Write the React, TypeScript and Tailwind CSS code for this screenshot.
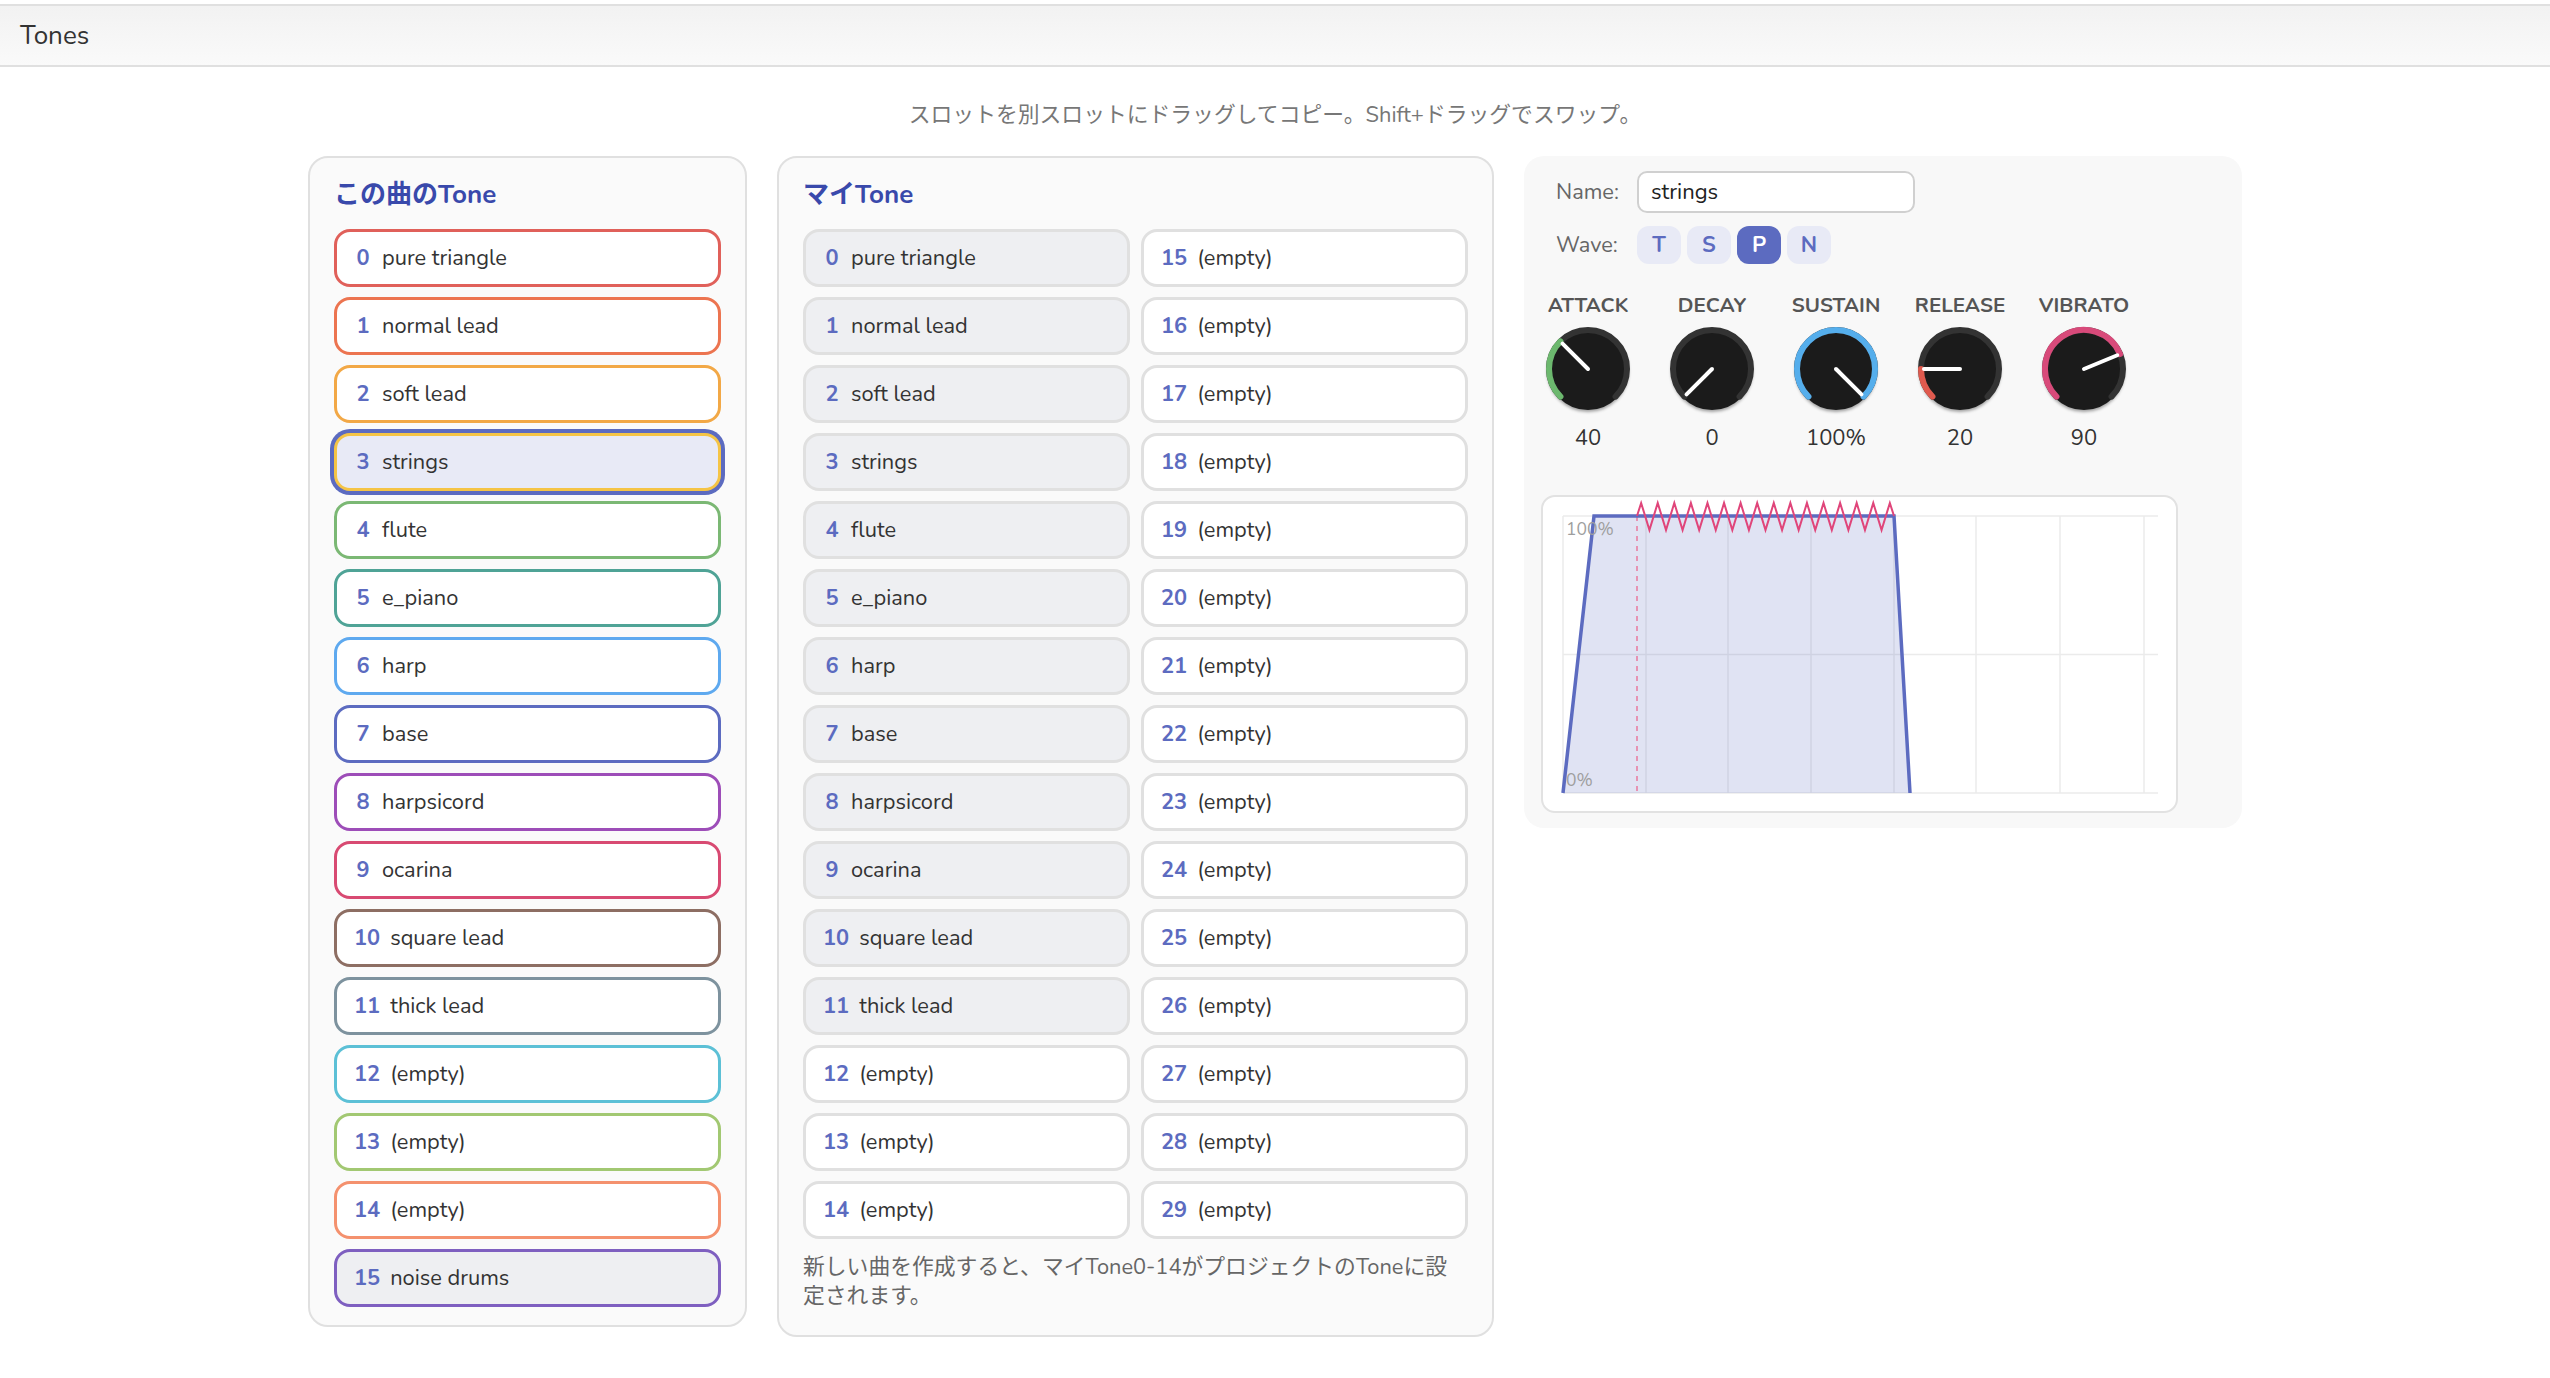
import clsx from 'clsx';

interface SongTone {
  name: string | null;
  border: string;
  selected?: boolean;
  muted?: boolean;
}

const songTones: SongTone[] = [
  { name: 'pure triangle', border: 'border-[#e0605a]' },
  { name: 'normal lead', border: 'border-[#ec7450]' },
  { name: 'soft lead', border: 'border-[#f2a846]' },
  { name: 'strings', border: 'border-[#f5c445]', selected: true },
  { name: 'flute', border: 'border-[#7bb874]' },
  { name: 'e_piano', border: 'border-[#4fa396]' },
  { name: 'harp', border: 'border-[#5ea9ef]' },
  { name: 'base', border: 'border-[#5c6bc0]' },
  { name: 'harpsicord', border: 'border-[#9d4db8]' },
  { name: 'ocarina', border: 'border-[#d84a72]' },
  { name: 'square lead', border: 'border-[#8d6e63]' },
  { name: 'thick lead', border: 'border-[#7d929e]' },
  { name: null, border: 'border-[#5cc0d6]' },
  { name: null, border: 'border-[#a2c872]' },
  { name: null, border: 'border-[#f4916e]' },
  { name: 'noise drums', border: 'border-[#7e5fc0]', muted: true },
];

const myTones: (string | null)[] = [
  'pure triangle',
  'normal lead',
  'soft lead',
  'strings',
  'flute',
  'e_piano',
  'harp',
  'base',
  'harpsicord',
  'ocarina',
  'square lead',
  'thick lead',
  null,
  null,
  null,
];

const knobs = [
  { label: 'ATTACK', value: '40', angle: -45, color: '#6cb86e' },
  { label: 'DECAY', value: '0', angle: -135, color: null },
  { label: 'SUSTAIN', value: '100%', angle: 135, color: '#55aeec' },
  { label: 'RELEASE', value: '20', angle: -90, color: '#e05a4e' },
  { label: 'VIBRATO', value: '90', angle: 67.5, color: '#d84a7a' },
];

function ToneSlot({
  index,
  name,
  className,
}: {
  index: number;
  name: string | null;
  className?: string;
}) {
  return (
    <div
      className={clsx(
        'flex h-[58px] items-center rounded-[16px] border-[3px] pl-[13px] text-[21.8px]',
        className
      )}
    >
      <span className="min-w-[26px] px-[4px] text-center font-bold text-[#5c6bc0]">{index}</span>
      <span className="ml-[6px] text-[#333]">{name ?? '(empty)'}</span>
    </div>
  );
}

function polar(angle: number, r: number, cx: number, cy: number) {
  const rad = (angle * Math.PI) / 180;
  return [cx + r * Math.sin(rad), cy - r * Math.cos(rad)];
}

function arcPath(a0: number, a1: number, r: number, cx: number, cy: number) {
  const [x0, y0] = polar(a0, r, cx, cy);
  const [x1, y1] = polar(a1, r, cx, cy);
  const large = a1 - a0 > 180 ? 1 : 0;
  return `M${x0} ${y0} A${r} ${r} 0 ${large} 1 ${x1} ${y1}`;
}

function Knob({ angle, color, id }: { angle: number; color: string | null; id: string }) {
  const cx = 45;
  const cy = 43;
  const [px, py] = polar(angle, 36, cx, cy);
  return (
    <svg width="90" height="90" viewBox="0 0 90 90">
      <defs>
        <filter id={id} x="-20%" y="-20%" width="140%" height="140%">
          <feGaussianBlur stdDeviation="1.6" />
        </filter>
      </defs>
      <circle cx={cx} cy={cy + 2} r="41" fill="rgba(0,0,0,0.35)" filter={`url(#${id})`} />
      <circle cx={cx} cy={cy} r="41" fill="#1b1b1b" />
      <path d={arcPath(-135, 135, 39, cx, cy)} fill="none" stroke="#333" strokeWidth="6" strokeLinecap="round" />
      {color ? (
        <path d={arcPath(-135, angle, 39, cx, cy)} fill="none" stroke={color} strokeWidth="6" strokeLinecap="round" />
      ) : null}
      <line x1={cx} y1={cy} x2={px} y2={py} stroke="#fff" strokeWidth="4" strokeLinecap="round" />
    </svg>
  );
}

function EnvelopeChart() {
  const ox = 20;
  const oy = 19;
  const pw = 595;
  const ph = 277;
  const period = 16.58;
  const zig: string[] = [`${ox + 74},${oy}`];
  for (let k = 0; k <= 30; k++) {
    const x = ox + 74 + period / 4 + (k * period) / 2;
    zig.push(`${x},${oy + (k % 2 === 0 ? -13 : 14)}`);
  }
  zig.push(`${ox + 331},${oy}`);
  const env = `${ox},${oy + ph} ${ox + 31},${oy} ${ox + 331},${oy} ${ox + 347},${oy + ph}`;

  return (
    <svg width="633" height="314" viewBox="0 0 633 314">
      {[0, 83, 165, 248, 331, 413, 497, 581].map((x) => (
        <line key={x} x1={ox + x} y1={oy} x2={ox + x} y2={oy + ph} stroke="#ebebeb" strokeWidth="1.5" />
      ))}
      {[0, 138.5, 277].map((y) => (
        <line key={y} x1={ox} y1={oy + y} x2={ox + pw} y2={oy + y} stroke="#ebebeb" strokeWidth="1.5" />
      ))}
      <polygon points={env} fill="#5c6bc0" fillOpacity="0.19" />
      <line
        x1={ox + 74}
        y1={oy}
        x2={ox + 74}
        y2={oy + ph}
        stroke="#e8799f"
        strokeWidth="1.5"
        strokeDasharray="5 5"
      />
      <polyline points={env} fill="none" stroke="#5c6bc0" strokeWidth="3.5" />
      <polyline points={zig.join(' ')} fill="none" stroke="#e0457a" strokeWidth="2" />
      <text x={ox + 3} y={oy + 19} fill="#9e9e9e" fontSize="17.5">
        100%
      </text>
      <text x={ox + 3} y={oy + 270} fill="#9e9e9e" fontSize="17.5">
        0%
      </text>
    </svg>
  );
}

export default function App() {
  return (
    <div className="min-h-screen bg-white font-['Nunito','Noto_Sans','Noto_Sans_CJK_JP',sans-serif] text-[#333]">
      <div className="h-[4px] bg-white" />
      <header className="flex h-[63px] items-center border-y-2 border-[#e0e0e0] bg-gradient-to-b from-[#f2f2f2] to-[#fafafa] px-[20px]">
        <h1 className="text-[26px] text-[#333]">Tones</h1>
      </header>

      <p className="pt-[33px] text-center text-[21.8px] leading-[30px] text-[#777]">
        スロットを別スロットにドラッグしてコピー。Shift+ドラッグでスワップ。
      </p>

      <main className="mt-[26px] flex items-start justify-center gap-[30px]">
        <section className="w-[439px] rounded-[20px] border-2 border-[#e0e0e0] bg-[#fafafa] px-[24px] pt-[22px] pb-[18px]">
          <h2 className="mb-[19px] text-[26px] font-bold leading-[30px] text-[#3949ab]">この曲のTone</h2>
          <div className="flex flex-col gap-[10px]">
            {songTones.map((tone, i) => (
              <ToneSlot
                key={i}
                index={i}
                name={tone.name}
                className={clsx(
                  tone.border,
                  tone.selected
                    ? 'bg-[#e8eaf6] shadow-[0_0_0_4px_#5c6bc0]'
                    : tone.muted
                      ? 'bg-[#eeeff2]'
                      : 'bg-white'
                )}
              />
            ))}
          </div>
        </section>

        <section className="w-[717px] rounded-[20px] border-2 border-[#e0e0e0] bg-[#fafafa] px-[24px] pt-[22px] pb-[24px]">
          <h2 className="mb-[19px] text-[26px] font-bold leading-[30px] text-[#3949ab]">マイTone</h2>
          <div className="grid grid-cols-2 gap-x-[11px]">
            <div className="flex flex-col gap-[10px]">
              {myTones.map((name, i) => (
                <ToneSlot
                  key={i}
                  index={i}
                  name={name}
                  className={clsx('border-[#e0e0e0]', name ? 'bg-[#eeeff2]' : 'bg-white')}
                />
              ))}
            </div>
            <div className="flex flex-col gap-[10px]">
              {Array.from({ length: 15 }, (_, i) => (
                <ToneSlot key={i} index={i + 15} name={null} className="border-[#e0e0e0] bg-white" />
              ))}
            </div>
          </div>
          <p className="mt-[14px] text-[21.8px] leading-[29px] text-[#666]">
            新しい曲を作成すると、マイTone0-14がプロジェクトのToneに設
            <br />
            定されます。
          </p>
        </section>

        <section className="w-[718px] rounded-[20px] bg-[#f8f8f8] pt-[15px] pb-[15px] pl-[17px]">
          <div className="flex h-[42px] items-center pl-[15px]">
            <span className="w-[81px] text-[21.8px] text-[#666]">Name:</span>
            <div className="flex h-[42px] w-[278px] items-center rounded-[10px] border-2 border-[#d0d0d0] bg-white pl-[12px] text-[22px] text-[#222]">
              strings
            </div>
          </div>
          <div className="mt-[13px] flex h-[38px] items-center pl-[15px]">
            <span className="w-[81px] text-[21.8px] text-[#666]">Wave:</span>
            <div className="flex gap-[6px]">
              {['T', 'S', 'P', 'N'].map((w) => (
                <span
                  key={w}
                  className={clsx(
                    'flex h-[38px] w-[44px] items-center justify-center rounded-[12px] text-[21.8px] font-bold',
                    w === 'P' ? 'bg-[#5c6bc0] text-white' : 'bg-[#e8eaf6] text-[#5c6bc0]'
                  )}
                >
                  {w}
                </span>
              ))}
            </div>
          </div>

          <div className="mt-[29px] flex gap-[34px] pl-[2px]">
            {knobs.map((k, i) => (
              <div key={k.label} className="flex w-[90px] flex-col items-center">
                <span className="whitespace-nowrap text-[20.6px] font-bold leading-[24px] text-[#555]">{k.label}</span>
                <div className="mt-[9px]">
                  <Knob angle={k.angle} color={k.color} id={`knob-shadow-${i}`} />
                </div>
                <span className="mt-[8px] text-[22px] leading-[28px] text-[#333]">{k.value}</span>
              </div>
            ))}
          </div>

          <div className="mt-[43px] h-[318px] w-[637px] rounded-[14px] border-2 border-[#e2e2e2] bg-white">
            <EnvelopeChart />
          </div>
        </section>
      </main>
    </div>
  );
}
